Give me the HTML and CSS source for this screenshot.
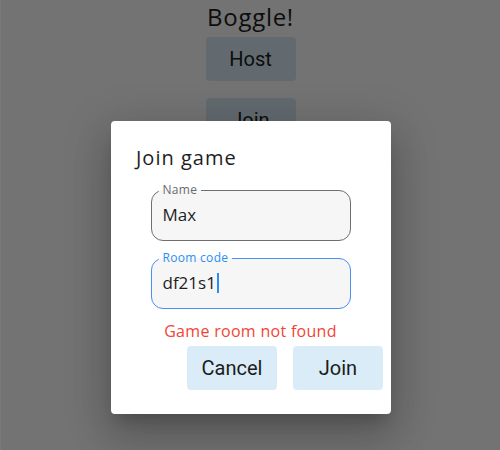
FILE: index.html
```html
<!DOCTYPE html>
<html>
<head>
<meta charset="utf-8">
<link rel="stylesheet" href="styles.css">
</head>
<body>
<div class="app">
  <div class="home">
    <h1 class="title">Boggle!</h1>
    <button class="btn">Host</button>
    <button class="btn">Join</button>
  </div>
  <div class="scrim"></div>
  <div class="dialog">
    <h2 class="dialog-title">Join game</h2>
    <div class="form">
      <fieldset class="field">
        <legend class="label">Name</legend>
        <div class="value">Max</div>
      </fieldset>
      <fieldset class="field focused">
        <legend class="label">Room code</legend>
        <div class="value">df21s1<span class="caret"></span></div>
      </fieldset>
      <div class="error">Game room not found</div>
    </div>
    <div class="actions">
      <button class="btn">Cancel</button>
      <button class="btn">Join</button>
    </div>
  </div>
</div>
</body>
</html>
```
FILE: styles.css
```css
html, body {
  margin: 0;
  padding: 0;
}
body {
  width: 500px;
  height: 450px;
  overflow: hidden;
  background: #ffffff;
  font-family: "Open Sans", sans-serif;
}
.app {
  position: relative;
  width: 500px;
  height: 450px;
  box-sizing: border-box;
  border-left: 1px solid #7a7a7a;
}
.home {
  display: flex;
  flex-direction: column;
  align-items: center;
  gap: 17px;
}
.title {
  margin: 0;
  height: 37px;
  margin-bottom: -17px;
  font-family: "Open Sans", sans-serif;
  font-weight: 400;
  font-size: 24px;
  line-height: 33px;
  letter-spacing: 0.7px;
  color: #1e1e1e;
}
.btn {
  width: 90px;
  height: 44px;
  border: none;
  border-radius: 4px;
  background: #d9ecf7;
  font-family: Roboto, sans-serif;
  font-size: 20px;
  color: #1c1c1c;
  padding: 0;
}
.scrim {
  position: absolute;
  inset: 0;
  background: rgba(0, 0, 0, 0.55);
}
.dialog {
  position: absolute;
  left: 110px;
  top: 121px;
  width: 280px;
  height: 293px;
  box-sizing: border-box;
  background: #ffffff;
  border-radius: 4px;
  box-shadow: 0 11px 15px -7px rgba(0,0,0,0.2), 0 24px 38px 3px rgba(0,0,0,0.14), 0 9px 46px 8px rgba(0,0,0,0.12);
  padding: 24px 8px 24px 25px;
  display: flex;
  flex-direction: column;
}
.dialog-title {
  margin: 0;
  font-family: "Open Sans", sans-serif;
  font-weight: 400;
  font-size: 20px;
  line-height: 26px;
  letter-spacing: 1px;
  color: #1e1e1e;
}
.form {
  display: flex;
  flex-direction: column;
  align-items: center;
  margin-top: 12px;
  margin-right: 18px;
  gap: 10px;
}
.field {
  width: 200px;
  height: 58px;
  box-sizing: border-box;
  margin: 0;
  padding: 0 11px;
  border: 1px solid #6f6f6f;
  border-radius: 12px;
  background: #f6f6f6;
  min-width: 0;
}
.field.focused {
  border-color: #4a8ff5;
}
.label {
  margin-left: -4px;
  padding: 0 4px;
  font-family: "Open Sans", sans-serif;
  font-size: 12px;
  line-height: 14px;
  letter-spacing: 0.3px;
  color: #6a6a6a;
}
.focused .label {
  color: #2a8ff0;
}
.value {
  font-family: "Open Sans", sans-serif;
  font-size: 17px;
  line-height: 24px;
  margin-top: 6px;
  color: #1e1e1e;
  display: flex;
  align-items: center;
}
.caret {
  display: inline-block;
  width: 2px;
  height: 20px;
  background: #2a8ff0;
  margin-left: 1px;
}
.error {
  margin-top: 1px;
  font-family: "Open Sans", sans-serif;
  font-size: 16px;
  line-height: 22px;
  letter-spacing: 0.3px;
  color: #f44336;
}
.actions {
  margin-top: auto;
  display: flex;
  justify-content: flex-end;
  gap: 16px;
}
```
